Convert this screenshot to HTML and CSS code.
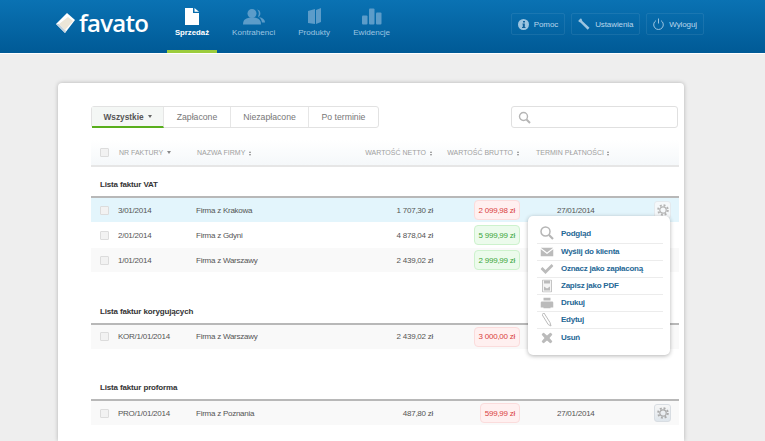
FILE: index.html
```html
<!DOCTYPE html>
<html lang="pl">
<head>
<meta charset="utf-8">
<title>favato</title>
<link rel="stylesheet" href="styles.css">
</head>
<body>
<header class="topbar">
  <div class="logo">
    <svg class="logo-mark" width="19" height="20" viewBox="0 0 19 20"><path d="M0 11 11 0l8 7-10 13z" fill="#fff"/><path d="M0 11l9 9 1-2-7-7z" fill="#c3d2de"/><path d="M12 4l5 4-8 9-6-6z" fill="#ece6d8"/></svg>
    <span class="logo-text">favato</span>
  </div>
  <nav class="mainnav">
    <a class="navitem active">
      <svg width="14" height="17" viewBox="0 0 14 17"><path d="M0 0h8v5h6v12H0zM9.500 0 14 3.800H9.500z" fill="#fff"/></svg>
      <span>Sprzedaż</span>
    </a>
    <a class="navitem">
      <svg width="22" height="16" viewBox="0 0 22 16"><g fill="#5c9cc9"><circle cx="9" cy="5" r="4.500"/><path d="M0 16c0-5 3-7 9-7s9 2 9 7z"/><path d="M14 1a4 4 0 0 1 1 7.600c4 .4 7 2.400 7 5.400h-3c-.5-3-2-5-4-6a6 6 0 0 0-1-7z"/></g></svg>
      <span>Kontrahenci</span>
    </a>
    <a class="navitem">
      <svg width="13" height="17" viewBox="0 0 13 17"><path d="M0 3 7 1v15l-7-1zM8 2l5-2v14l-5 2z" fill="#5c9cc9"/></svg>
      <span>Produkty</span>
    </a>
    <a class="navitem">
      <svg width="20" height="16" viewBox="0 0 20 16"><g fill="#5c9cc9"><rect y="7" width="5.500" height="9" rx="1"/><rect x="7" width="5.500" height="16" rx="1"/><rect x="14" y="4" width="5.500" height="12" rx="1"/></g></svg>
      <span>Ewidencje</span>
    </a>
  </nav>
  <div class="tools">
    <a class="tool">
      <svg width="11" height="11" viewBox="0 0 11 11"><circle cx="5.500" cy="5.500" r="5.500" fill="#9cc4e0"/><path d="M5 2h2v1.600H5zM4.500 4.500h2.300v3.600h.7V9H4V8.100h.8V5.400h-.3z" fill="#10609a"/></svg>
      <span>Pomoc</span>
    </a>
    <a class="tool">
      <svg width="12" height="12" viewBox="0 0 12 12"><path d="M.5 2.500 2.500.5l1 .2.800 2.300 7.200 6.800-1.800 2-7-7L.5 3.500z" fill="#9cc4e0"/></svg>
      <span>Ustawienia</span>
    </a>
    <a class="tool">
      <svg width="11" height="12" viewBox="0 0 11 12"><path d="M3 2.600a4.800 4.800 0 1 0 5 0M5.500.5v5" fill="none" stroke="#9cc4e0" stroke-width="1"/></svg>
      <span>Wyloguj</span>
    </a>
  </div>
</header>

<main class="page">
  <section class="card">
    <div class="toolbar">
      <div class="tabs">
        <a class="tab active">Wszystkie <i class="caret"></i></a>
        <a class="tab t2">Zapłacone</a>
        <a class="tab t3">Niezapłacone</a>
        <a class="tab t4">Po terminie</a>
      </div>
      <label class="search">
        <svg width="13" height="13" viewBox="0 0 13 13"><circle cx="5.500" cy="5.500" r="4" fill="none" stroke="#b5b5b5" stroke-width="1.400"/><path d="m8.500 8.500 3.500 3.500" stroke="#b5b5b5" stroke-width="2"/></svg>
      </label>
    </div>

    <div class="row head">
      <span class="check"></span>
      <span class="hnr">NR FAKTURY <i class="caret grey"></i></span>
      <span class="hfirm">NAZWA FIRMY <i class="sort"></i></span>
      <span class="hnetto">WARTOŚĆ NETTO <i class="sort"></i></span>
      <span class="hbrutto">WARTOŚĆ BRUTTO <i class="sort"></i></span>
      <span class="hterm">TERMIN PŁATNOŚCI <i class="sort"></i></span>
    </div>

    <h2 class="title first">Lista faktur VAT</h2>
    <div class="row item hot">
      <span class="check"></span><span>3/01/2014</span><span>Firma z Krakowa</span><span class="num">1 707,30 zł</span>
      <span class="pillcell"><b class="pill red">2 099,98 zł</b></span><span class="date">27/01/2014</span>
      <span class="gearcell"><a class="gear light"><svg width="12" height="12" viewBox="0 0 12 12"><circle cx="6" cy="6" r="3.200" fill="none" stroke="#b5b5b5" stroke-width="1.200"/><circle cx="6" cy="6" r="4.800" fill="none" stroke="#b5b5b5" stroke-width="2" stroke-dasharray="1.900 1.870"/></svg></a></span>
      <div class="menu">
        <a class="mi"><svg width="14" height="14" viewBox="0 0 14 14"><circle cx="5.500" cy="5.500" r="4.500" fill="none" stroke="#b5b5b5" stroke-width="1.500"/><path d="m9 9 4 4" stroke="#b5b5b5" stroke-width="2.200"/></svg><span>Podgląd</span></a>
        <a class="mi"><svg width="13" height="9" viewBox="0 0 13 9"><path d="M0 0h13L6.500 5zM0 1.500v7.500h13V1.500L6.500 6.500z" fill="#bbb"/></svg><span>Wyślij do klienta</span></a>
        <a class="mi"><svg width="13" height="10" viewBox="0 0 13 10"><path d="m0 5 2-2 3 3 6-6 2 2-8 8z" fill="#bbb"/></svg><span>Oznacz jako zapłaconą</span></a>
        <a class="mi"><svg width="10" height="13" viewBox="0 0 10 13"><path d="M.5.500h9v12h-9z" fill="#f4f4f4" stroke="#c4c4c4"/><path d="M2 1h6v3H2zM2 7l3 2 3-2v4H2z" fill="#bbb"/></svg><span>Zapisz jako PDF</span></a>
        <a class="mi"><svg width="13" height="11" viewBox="0 0 13 11"><path d="M3 0h7v3H3zM1 4h11l1 1v5H0V5zM3 8h7v3H3z" fill="#bbb"/></svg><span>Drukuj</span></a>
        <a class="mi"><svg width="10" height="14" viewBox="0 0 10 14"><path d="M2 0 8 9.500 9 13 6.200 11.500 0 1.500z" fill="none" stroke="#bbb"/></svg><span>Edytuj</span></a>
        <a class="mi"><svg width="11" height="11" viewBox="0 0 11 11"><path d="M2 0l3.500 3L9 0l2 2-3 3.500L11 9l-2 2-3.500-3L2 11 0 9l3-3.500L0 2z" fill="#bbb"/></svg><span>Usuń</span></a>
      </div>
    </div>
    <div class="row item">
      <span class="check"></span><span>2/01/2014</span><span>Firma z Gdyni</span><span class="num">4 878,04 zł</span>
      <span class="pillcell"><b class="pill green">5 999,99 zł</b></span>
    </div>
    <div class="row item alt">
      <span class="check"></span><span>1/01/2014</span><span>Firma z Warszawy</span><span class="num">2 439,02 zł</span>
      <span class="pillcell"><b class="pill green">2 999,99 zł</b></span>
    </div>

    <h2 class="title">Lista faktur korygujących</h2>
    <div class="row item alt">
      <span class="check"></span><span>KOR/1/01/2014</span><span>Firma z Warszawy</span><span class="num">2 439,02 zł</span>
      <span class="pillcell"><b class="pill red">3 000,00 zł</b></span>
    </div>

    <h2 class="title">Lista faktur proforma</h2>
    <div class="row item alt">
      <span class="check"></span><span>PRO/1/01/2014</span><span>Firma z Poznania</span><span class="num">487,80 zł</span>
      <span class="pillcell"><b class="pill red">599,99 zł</b></span><span class="date">27/01/2014</span>
      <span class="gearcell"><a class="gear"><svg width="12" height="12" viewBox="0 0 12 12"><circle cx="6" cy="6" r="3.200" fill="none" stroke="#aaa" stroke-width="1.200"/><circle cx="6" cy="6" r="4.800" fill="none" stroke="#aaa" stroke-width="2" stroke-dasharray="1.900 1.870"/></svg></a></span>
    </div>
  </section>
</main>
</body>
</html>
```
FILE: styles.css
```css
* { box-sizing: border-box; }
html, body { margin: 0; height: 100%; }
body {
  overflow: hidden;
  display: flex;
  flex-direction: column;
  background: #eee;
  font-family: "Liberation Sans", Arial, sans-serif;
  font-size: 8px;
  letter-spacing: -.25px;
  color: #555;
}
.topbar {
  flex: none;
  height: 54px;
  display: flex;
  padding-left: 56px;
  letter-spacing: 0;
  background: linear-gradient(#0a72b3, #005a96);
  border-bottom: 1px solid #fff;
}
.logo { width: 111px; display: flex; align-items: center; gap: 4px; height: 46px; }
.logo-text { font-family: "Open Sans", sans-serif; font-size: 24px; font-weight: 600; color: #fff; letter-spacing: -.7px; line-height: 1; }
.mainnav { display: flex; gap: 9px; }
.navitem {
  height: 53px;
  padding: 8px 7px 0;
  display: flex;
  flex-direction: column;
  align-items: center;
  color: #9ec5e2;
  font-size: 8.1px;
  border-bottom: 3px solid transparent;
}
.navitem svg { height: 17px; flex: none; }
.navitem span { margin-top: 3px; line-height: 10px; }
.navitem.active { margin-right: -1px; color: #fff; font-weight: bold; font-size: 7.8px; border-bottom-color: #9ccc3c; width: 50px; }
.tools { margin-left: auto; margin-right: 61px; margin-top: 13px; display: flex; gap: 6px; height: 22px; }
.tool {
  display: flex;
  align-items: center;
  gap: 5px;
  padding: 0 6px;
  color: #b8d6ec;
  font-size: 8px;
  letter-spacing: -.1px;
  border: 1px solid rgba(255,255,255,.08);
  border-radius: 2px;
}
.page { flex: 1; min-height: 0; padding: 29px 81px 0 58px; display: flex; }
.card {
  flex: 1;
  padding: 23px 5px 0 33px;
  background: #fff;
  border-radius: 4px 4px 0 0;
  box-shadow: 0 0 4px rgba(0,0,0,.25);
}
.toolbar { display: flex; justify-content: space-between; height: 22px; }
.tabs {
  width: 288px;
  display: flex;
  border: 1px solid #e2e2e2;
  border-radius: 3px;
  font-size: 8.7px;
  letter-spacing: 0;
  color: #777;
}
.tab { display: flex; align-items: center; justify-content: center; gap: 4px; border-right: 1px solid #e6e6e6; }
.tab.active {
  width: 72px;
  color: #555;
  font-size: 8.3px;
  font-weight: bold;
  background: #f4f7f5;
  border-bottom: 2px solid #58ae1c;
  margin-bottom: -1px;
}
.t2 { width: 67px; } .t3 { width: 78px; } .t4 { flex: 1; border-right: 0; }
.caret { display: inline-block; border: 2.500px solid transparent; border-top: 3px solid #666; border-bottom: 0; vertical-align: 1px; }
.caret.grey { border-top-color: #888; margin-left: 2px; }
.search {
  width: 167px;
  margin-right: 1px;
  display: flex;
  align-items: center;
  padding-left: 6px;
  border: 1px solid #e0e0e0;
  border-radius: 3px;
}
.row {
  display: grid;
  grid-template-columns: 18px 78px 150px 87px 87px 134px 17px;
  align-items: center;
  padding-left: 9px;
  position: relative;
}
.head {
  margin-top: 12px;
  height: 27px;
  color: #a0a0a0;
  font-size: 7px;
  letter-spacing: 0;
  background: linear-gradient(#fff, #f5f8fa);
  border-bottom: 2px solid #e6e6e6;
}
.head span { white-space: nowrap; }
.hnr, .hfirm { padding-left: 1px; }
.hnetto { justify-self: end; }
.hbrutto { justify-self: end; }
.hterm { padding-left: 16px; }
.sort { display: inline-block; position: relative; width: 4px; height: 5px; margin-left: 1px; vertical-align: -.5px; }
.sort::before, .sort::after { content: ""; position: absolute; left: .5px; border: 1.500px solid transparent; }
.sort::before { top: 0; border-top: 0; border-bottom: 2px solid #888; }
.sort::after { bottom: 0; border-bottom: 0; border-top: 2px solid #888; }
.check {
  width: 9px;
  height: 9px;
  background: #f2f2f2;
  border: 1px solid #dcdcdc;
  border-radius: 1px;
}
.title {
  margin: 21.500px 0 0;
  height: 31px;
  padding: 13px 0 0 9px;
  font-size: 8px;
  letter-spacing: -.15px;
  line-height: 10px;
  font-weight: bold;
  color: #333;
  border-bottom: 2px solid #b8b8b8;
}
.title.first { margin-top: 0; }
.item { height: 24px; margin-bottom: 1px; white-space: nowrap; }
.hot { background: #e3f5fc; }
.alt { background: #f9f9f9; }
.num { text-align: right; }
.pillcell { display: flex; justify-content: flex-end; }
.pill {
  height: 20px;
  padding: 0 4px;
  display: flex;
  align-items: center;
  font-weight: normal;
  border-radius: 4px;
  border: 1px solid;
}
.red { color: #d94040; background: #fff0f0; border-color: #fbdcdc; }
.green { color: #3aa53a; background: #ecfbec; border-color: #cdf2cd; }
.date { padding-left: 37px; }
.gearcell { display: flex; }
.gear {
  width: 17px;
  height: 18px;
  display: flex;
  align-items: center;
  justify-content: center;
  border: 1px solid #d8dde2;
  border-radius: 3px;
  background: linear-gradient(#f6f6f6, #dfe6ec);
}
.gear.light { background: #f5f8fa; border-color: #e4eaee; }
.menu {
  position: absolute;
  z-index: 2;
  left: 437px;
  top: 18px;
  width: 142px;
  height: 139px;
  padding: 8px 7px 0 9px;
  background: #fff;
  border-radius: 5px;
  box-shadow: 0 1px 4px rgba(0,0,0,.3);
}
.mi {
  height: 17.100px;
  display: flex;
  align-items: center;
  position: relative;
  padding-left: 24px;
  color: #1f6896;
  font-weight: bold;
  border-bottom: 1px solid #ececec;
}
.mi:first-child { height: 19.500px; }
.mi:last-child { border-bottom: 0; }
.mi svg { position: absolute; left: 10px; top: 50%; transform: translate(-50%, -50%); }
```
